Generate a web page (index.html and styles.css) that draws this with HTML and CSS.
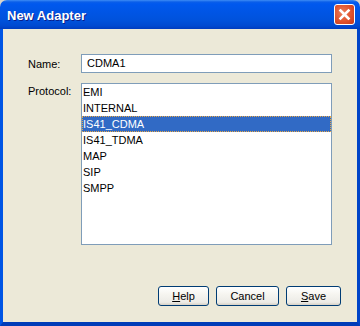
FILE: index.html
```html
<!DOCTYPE html>
<html>
<head>
<meta charset="utf-8">
<link rel="stylesheet" href="styles.css">
</head>
<body>
<div class="window">
  <div class="titlebar">
    <span class="title">New Adapter</span>
    <button class="close" aria-label="Close">
      <svg width="13" height="13" viewBox="0 0 13 13"><path d="M2.5 2.5 L10.5 10.5 M10.5 2.5 L2.5 10.5" stroke="#fff" stroke-width="2.6" stroke-linecap="square"/></svg>
    </button>
  </div>
  <div class="client">
    <div class="form">
      <label class="label name-label">Name:</label>
      <div class="field">CDMA1</div>
      <label class="label proto-label">Protocol:</label>
      <ul class="list">
        <li>EMI</li>
        <li>INTERNAL</li>
        <li class="selected">IS41_CDMA</li>
        <li>IS41_TDMA</li>
        <li>MAP</li>
        <li>SIP</li>
        <li>SMPP</li>
      </ul>
    </div>
    <div class="buttons">
      <button class="btn btn-help"><u>H</u>elp</button>
      <button class="btn btn-cancel">Cancel</button>
      <button class="btn btn-save"><u>S</u>ave</button>
    </div>
  </div>
</div>
</body>
</html>
```
FILE: styles.css
```css
html, body {
  margin: 0;
  padding: 0;
  background: #d8d4cc;
}
.window {
  width: 360px;
  height: 326px;
  display: flex;
  flex-direction: column;
  border-radius: 7px 7px 0 0;
  overflow: hidden;
  font-family: "Liberation Sans", Arial, sans-serif;
  font-size: 11px;
  color: #000;
}
.titlebar {
  height: 29px;
  flex: none;
  display: flex;
  align-items: center;
  justify-content: space-between;
  padding: 0 5px 0 7px;
  box-sizing: border-box;
  background: linear-gradient(to bottom, #3d8cf5 0px, #0a5ee9 2px, #0058ee 4px, #0055e5 12px, #0052dc 20px, #0049d0 26px, #003cbe 29px);
}
.title {
  color: #fff;
  font-weight: bold;
  font-size: 13px;
  letter-spacing: 0;
  text-shadow: 1px 1px 0 #0a1e8a;
  padding-top: 1px;
}
.close {
  width: 21px;
  height: 21px;
  padding: 0;
  margin: 0;
  border: 1px solid #fff;
  border-radius: 3px;
  background: radial-gradient(circle at 40% 40%, #ec7f5c 0%, #e0522c 55%, #c2371a 100%);
  display: flex;
  align-items: center;
  justify-content: center;
  box-sizing: border-box;
}
.close svg { display: block; }
.client {
  flex: 1;
  display: flex;
  flex-direction: column;
  background: #ece9d8;
  border-left: 3px solid #0055e5;
  border-right: 3px solid #0044c8;
  border-bottom: 4px solid #003cb8;
  padding: 25px 16px 16px 25px;
}
.form {
  display: grid;
  grid-template-columns: 53px 251px;
  grid-template-rows: 19px 162px;
  row-gap: 10px;
}
.label {
  display: block;
}
.name-label {
  align-self: center;
}
.proto-label {
  padding-top: 2px;
}
.field {
  box-sizing: border-box;
  border: 1px solid #7f9db9;
  background: #fff;
  padding-left: 5px;
  line-height: 17px;
}
.list {
  margin: 0;
  padding: 0;
  list-style: none;
  box-sizing: border-box;
  border: 1px solid #7f9db9;
  background: #fff;
}
.list li {
  height: 16px;
  line-height: 16px;
  padding-left: 1px;
}
.list li.selected {
  background: #316ac5;
  color: #fff;
  outline: 1px dotted #e8a848;
  outline-offset: -1px;
}
.buttons {
  margin-top: auto;
  display: flex;
  justify-content: flex-end;
  gap: 7px;
}
.btn {
  height: 20px;
  box-sizing: border-box;
  border: 1px solid #003c74;
  border-radius: 3px;
  background: linear-gradient(to bottom, #ffffff 0%, #f6f5f0 40%, #ecebe6 85%, #d6d0c5 100%);
  font-family: "Liberation Sans", Arial, sans-serif;
  font-size: 11px;
  color: #000;
  padding: 0;
  margin: 0;
}
.btn u { text-decoration: underline; }
.btn-help { width: 51px; }
.btn-cancel { width: 63px; }
.btn-save { width: 55px; }
```
